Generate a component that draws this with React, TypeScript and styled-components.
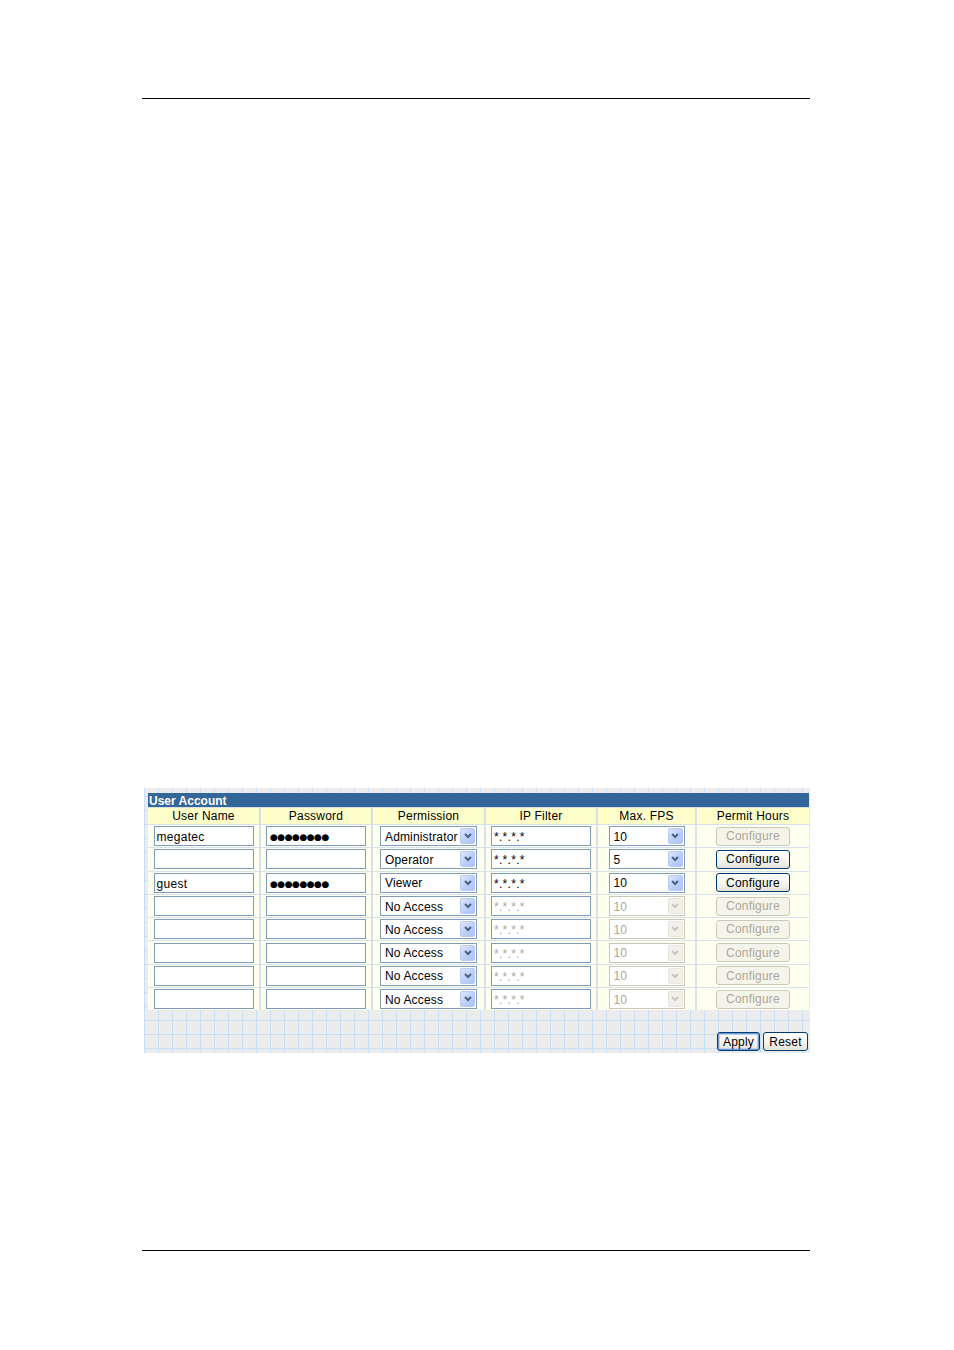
import React from "react";
import styled, { createGlobalStyle } from "styled-components";

const GlobalStyle = createGlobalStyle`
  html, body { margin: 0; padding: 0; background: #ffffff; }
  body { font-family: "Liberation Sans", Arial, sans-serif; }
  * { box-sizing: border-box; }
`;

const Page = styled.div`
  width: 954px;
  height: 1350px;
  padding-top: 98px;
  display: flex;
  flex-direction: column;
`;

const Rule = styled.div<{ $top?: number }>`
  width: 668px;
  height: 1px;
  margin-left: 142px;
  margin-top: ${(p) => p.$top ?? 0}px;
  background: #000000;
  flex: none;
`;

const Panel = styled.div`
  margin: 689px 0 0 144px;
  width: 666px;
  height: 265px;
  flex: none;
  padding: 5px 1px 2px 4px;
  display: flex;
  flex-direction: column;
  background-color: #ececec;
  background-image: linear-gradient(#c9ddf4 1px, transparent 1px),
    linear-gradient(90deg, #c9ddf4 1px, transparent 1px);
  background-size: 14px 14px;
  background-position: 0 8px;
`;

const TitleBar = styled.div`
  height: 14px;
  line-height: 15px;
  padding-top: 1px;
  background: #336699;
  color: #ffffff;
  font-weight: bold;
  font-size: 12px;
  padding-left: 1px;
  white-space: nowrap;
`;

const Grid = styled.div`
  display: grid;
  grid-template-columns: 111px 110px 111px 110px 97px 112px;
  grid-template-rows: 16px repeat(8, 22.3px);
  column-gap: 2px;
  row-gap: 1px;
  padding-top: 1px;
  background: #d6e1ec;
`;

const HeadCell = styled.div`
  background: #ffffcc;
  font-size: 12px;
  line-height: 17px;
  letter-spacing: 0.2px;
  text-align: center;
  color: #000000;
  white-space: nowrap;
`;

const Cell = styled.div`
  background: #fffff0;
  display: flex;
  align-items: center;
  justify-content: center;
`;

const TextBox = styled.div<{ $disabled?: boolean }>`
  width: 100px;
  height: 20px;
  border: 1px solid #7f9db9;
  background: #ffffff;
  font-size: 12px;
  line-height: 20px;
  letter-spacing: 0.3px;
  padding-left: 2px;
  color: ${(p) => (p.$disabled ? "#aca899" : "#000000")};
  white-space: nowrap;
  overflow: hidden;
`;

const Dots = styled.span`
  font-family: "DejaVu Sans", sans-serif;
  font-size: 9px;
  letter-spacing: -0.5px;
  padding-left: 1px;
  vertical-align: top;
`;

const DropDown = styled.div<{ $width: number; $disabled?: boolean }>`
  width: ${(p) => p.$width}px;
  height: 20px;
  border: 1px solid ${(p) => (p.$disabled ? "#c9c7ba" : "#7f9db9")};
  background: #ffffff;
  display: flex;
  align-items: center;
  font-size: 12px;
  letter-spacing: 0.15px;
  color: ${(p) => (p.$disabled ? "#aca899" : "#000000")};
`;

const DropText = styled.span`
  flex: 1;
  padding-left: 4px;
  padding-top: 1px;
  white-space: nowrap;
  overflow: hidden;
`;

const Arrow = styled.span<{ $disabled?: boolean }>`
  flex: none;
  width: 15px;
  height: 16px;
  margin: 0 1px 0 2px;
  border: 1px solid ${(p) => (p.$disabled ? "#e6e4dc" : "#b7c8f1")};
  border-radius: 2px;
  background: ${(p) =>
    p.$disabled
      ? "#f1f0ea"
      : "linear-gradient(135deg, #dde7fd 0%, #bccffb 55%, #adc2f5 100%)"};
  display: flex;
  align-items: center;
  justify-content: center;
  color: ${(p) => (p.$disabled ? "#c9c7ba" : "#4d6185")};
`;

const XPButton = styled.button<{ $disabled?: boolean; $width?: number; $default?: boolean }>`
  width: ${(p) => p.$width ?? 74}px;
  height: 19px;
  padding: 0;
  font-family: "Liberation Sans", Arial, sans-serif;
  font-size: 12px;
  line-height: 16px;
  letter-spacing: 0.2px;
  border-radius: 3px;
  border: 1px solid ${(p) => (p.$disabled ? "#cac8bb" : "#003c74")};
  color: ${(p) => (p.$disabled ? "#aca899" : "#000000")};
  background: ${(p) =>
    p.$disabled ? "#f5f4ea" : "linear-gradient(#ffffff 0%, #f4f3ee 60%, #e3e1d6 100%)"};
  box-shadow: ${(p) => (p.$default ? "inset 0 0 0 1px #6c9ad4, inset 0 0 0 2px #b9d1f3" : "none")};
  cursor: default;
`;

const ButtonRow = styled.div`
  margin-top: auto;
  display: flex;
  justify-content: flex-end;
  gap: 3px;
  padding-right: 1px;
`;

const Chevron = () => (
  <svg width="8" height="6" viewBox="0 0 8 6">
    <polyline points="1,1 4,4 7,1" fill="none" stroke="currentColor" strokeWidth="2" />
  </svg>
);

type Row = {
  user: string;
  pwd: boolean;
  perm: string;
  active: boolean;
  fps: string;
  config: boolean;
};

const rows: Row[] = [
  { user: "megatec", pwd: true, perm: "Administrator", active: true, fps: "10", config: false },
  { user: "", pwd: false, perm: "Operator", active: true, fps: "5", config: true },
  { user: "guest", pwd: true, perm: "Viewer", active: true, fps: "10", config: true },
  { user: "", pwd: false, perm: "No Access", active: false, fps: "10", config: false },
  { user: "", pwd: false, perm: "No Access", active: false, fps: "10", config: false },
  { user: "", pwd: false, perm: "No Access", active: false, fps: "10", config: false },
  { user: "", pwd: false, perm: "No Access", active: false, fps: "10", config: false },
  { user: "", pwd: false, perm: "No Access", active: false, fps: "10", config: false },
];

const headers = ["User Name", "Password", "Permission", "IP Filter", "Max. FPS", "Permit Hours"];

export default function App() {
  return (
    <>
      <GlobalStyle />
      <Page>
        <Rule />
        <Panel>
          <TitleBar>User Account</TitleBar>
          <Grid>
            {headers.map((h) => (
              <HeadCell key={h}>{h}</HeadCell>
            ))}
            {rows.map((r, i) => (
              <React.Fragment key={i}>
                <Cell>
                  <TextBox>{r.user}</TextBox>
                </Cell>
                <Cell>
                  <TextBox>{r.pwd && <Dots>●●●●●●●●</Dots>}</TextBox>
                </Cell>
                <Cell>
                  <DropDown $width={97}>
                    <DropText>{r.perm}</DropText>
                    <Arrow>
                      <Chevron />
                    </Arrow>
                  </DropDown>
                </Cell>
                <Cell>
                  <TextBox $disabled={!r.active}>*.*.*.*</TextBox>
                </Cell>
                <Cell>
                  <DropDown $width={76} $disabled={!r.active}>
                    <DropText>{r.fps}</DropText>
                    <Arrow $disabled={!r.active}>
                      <Chevron />
                    </Arrow>
                  </DropDown>
                </Cell>
                <Cell>
                  <XPButton $disabled={!r.config}>Configure</XPButton>
                </Cell>
              </React.Fragment>
            ))}
          </Grid>
          <ButtonRow>
            <XPButton $width={43} $default>
              Apply
            </XPButton>
            <XPButton $width={45}>Reset</XPButton>
          </ButtonRow>
        </Panel>
        <Rule $top={197} />
      </Page>
    </>
  );
}
